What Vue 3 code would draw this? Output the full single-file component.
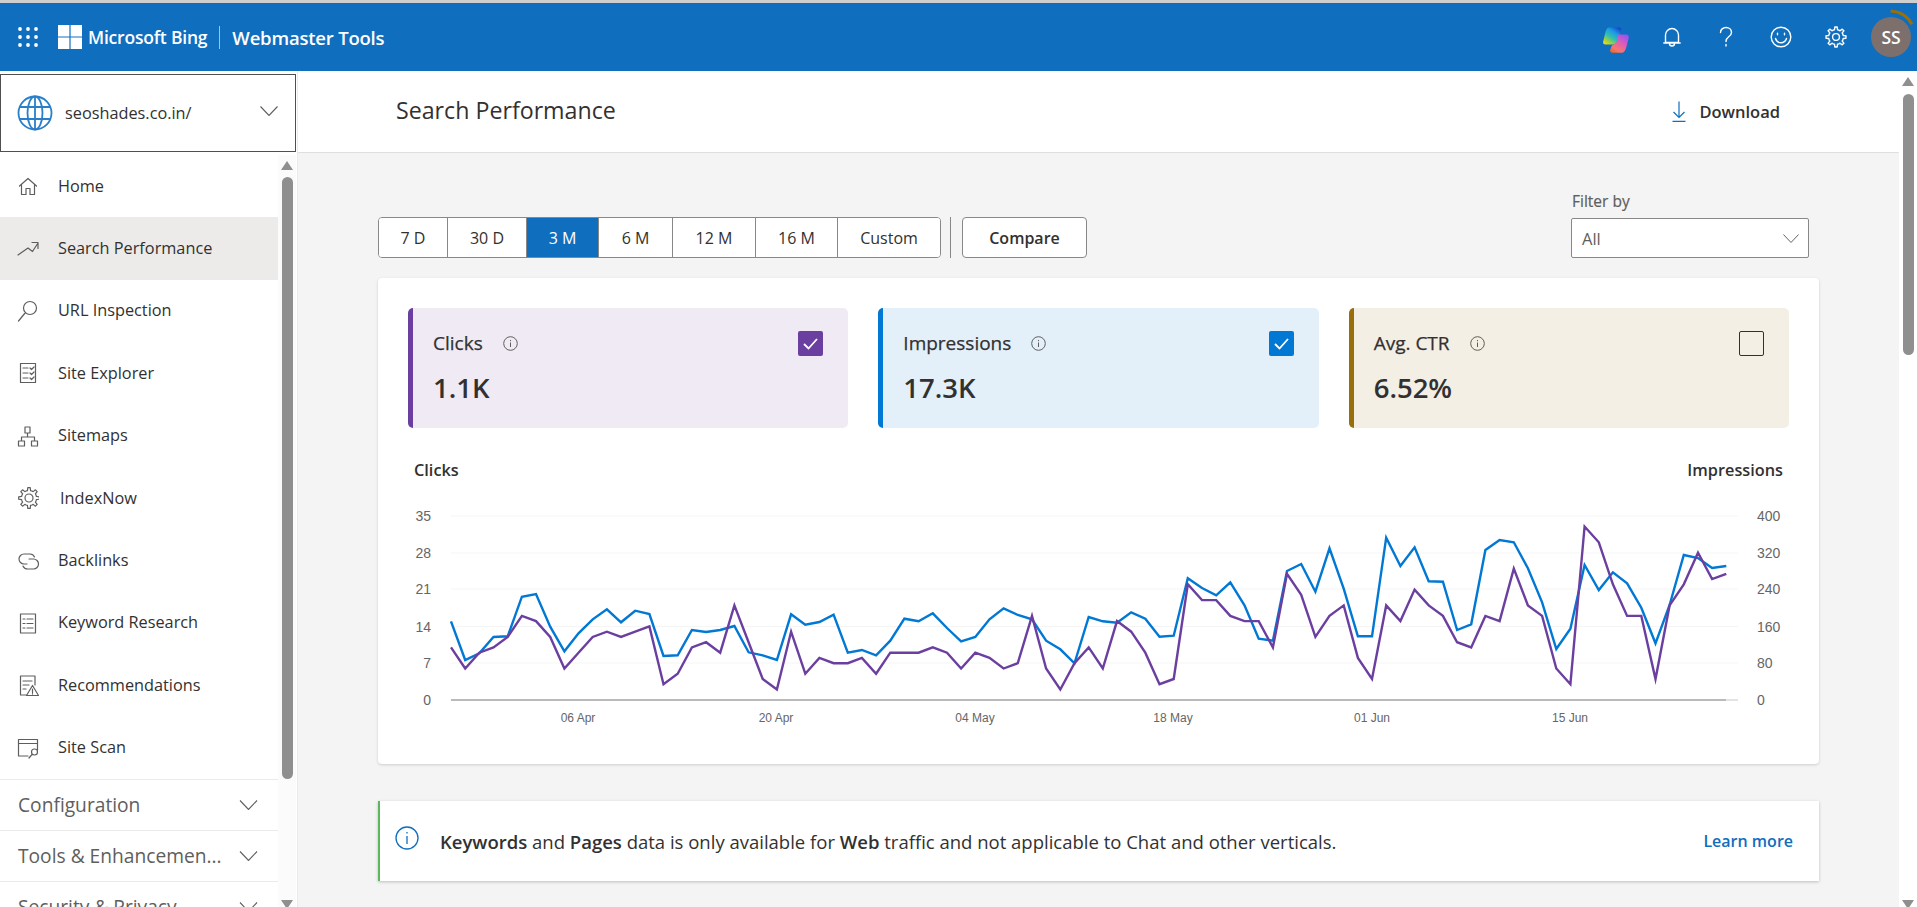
<script setup>
const gear = (cx, cy, r1, r2, n) => {
  let d = ''
  const step = (Math.PI * 2) / n
  for (let i = 0; i < n; i++) {
    const a = i * step
    const pts = [
      [a - step * 0.5, r1], [a - step * 0.26, r1], [a - step * 0.15, r2], [a + step * 0.15, r2], [a + step * 0.26, r1]
    ]
    pts.forEach(([t, r], j) => {
      const x = (cx + Math.cos(t) * r).toFixed(2)
      const y = (cy + Math.sin(t) * r).toFixed(2)
      d += (i === 0 && j === 0 ? 'M' : 'L') + x + ' ' + y
    })
  }
  return d + 'Z'
}
const circle = (cx, cy, r) => `M${cx - r} ${cy}a${r} ${r} 0 1 0 ${r * 2} 0a${r} ${r} 0 1 0 ${-r * 2} 0`

const navItems = [
  { label: 'Home', icon: 'M2.5 11 11 3.5l8.5 7.5M4.5 9.5V19.5H9V13.5h4V19.5h4.5V9.5' },
  { label: 'Search Performance', active: true, icon: 'M1 17 11 10l4.5 3.5 5.5-8.5M15 4.5h6v6' },
  { label: 'URL Inspection', icon: circle(13, 8, 6.5) + 'M1.5 21 8.5 12.5' },
  { label: 'Site Explorer', icon: 'M3.5 1.5h15v19h-15zM6 6h5M6 11h5M6 16h5M13 6l1.5 1.5L17 5M13 11l1.5 1.5L17 10M13 16l1.5 1.5L17 15' },
  { label: 'Sitemaps', icon: 'M8 2h5v6H8zM1.5 16h6v5h-6zM14.5 16h6v5h-6zM10.5 8v4M4.5 16v-4h13v4' },
  { label: 'IndexNow', shift: true, icon: gear(12, 11, 7.6, 10.4, 8) + circle(12, 11, 4) },
  { label: 'Backlinks', icon: 'M10 14H7a5 5 0 0 1 0-10h6a5 5 0 0 1 4.5 3M12 9h4.5a5 5 0 0 1 0 10h-6a5 5 0 0 1-4.5-3' },
  { label: 'Keyword Research', icon: 'M3.5 2h15v19h-15zM6 7h2M10 7h6M6 11.5h2M10 11.5h6M6 16h2M10 16h6' },
  { label: 'Recommendations', icon: 'M18 11V2H3.5v19h6M6 7h9M6 11h6M6 15h3M15.5 11.5 21.5 21.5H9.5zM15.5 15v3.5M15.5 19.5v.6' },
  { label: 'Site Scan', icon: 'M1.5 19V2.5h19V13M1.5 6.5h19M1.5 19H11' + circle(17.5, 15, 3) + 'M15 17.5l-3 3.5' }
]
const sections = ['Configuration', 'Tools & Enhancemen...', 'Security & Privacy']
const ranges = ['7 D', '30 D', '3 M', '6 M', '12 M', '16 M', 'Custom']
const rangeWidths = [69, 79, 72, 74, 83, 82, 102]
const metrics = [
  { label: 'Clicks', value: '1.1K', tone: 'purple', checked: true },
  { label: 'Impressions', value: '17.3K', tone: 'blue', checked: true },
  { label: 'Avg. CTR', value: '6.52%', tone: 'brown', checked: false }
]

const clicks = [10,6,9,10,12,16,15,12,6,9,12,13,12,13,14,3,5,10,11,9,18,11,4,2,13,5,8,7,7,8,5,9,9,9,10,9,6,9,8,6,7,16,6,2,7,10,6,15,13,9,3,4,22,19,19,16,15,15,10,24,20,12,16,18,8,4,18,15,21,18,16,11,10,16,15,25,18,16,6,3,33,30,22,16,16,4,18,22,28,23,24]
const blueZ = [394,510,490,441,439,320,312,410,484,430,388,358,397,362,372,498,496,420,426,420,408,487,496,510,373,404,396,374,488,480,496,452,386,394,370,414,454,441,388,355,375,388,452,478,520,381,394,398,367,386,440,437,265,294,316,277,346,446,452,243,222,305,175,296,439,439,143,228,172,274,275,420,403,180,150,157,235,337,477,416,225,300,247,280,353,460,345,195,204,234,228]
const X0 = 451
const PITCH = 14.17
const purplePts = clicks.map((c, i) => `${(X0 + PITCH * i).toFixed(1)},${(700 - c * 5.257).toFixed(1)}`).join(' ')
const bluePts = blueZ.map((z, i) => `${(X0 + PITCH * i).toFixed(1)},${(490 + z / 3).toFixed(1)}`).join(' ')
const gridYs = [516, 553, 589, 626.5, 663]
const leftAxis = [['35', 516], ['28', 553], ['21', 589], ['14', 627], ['7', 663], ['0', 700]]
const rightAxis = [['400', 516], ['320', 553], ['240', 589], ['160', 627], ['80', 663], ['0', 700]]
const dates = [['06 Apr', 578], ['20 Apr', 776], ['04 May', 975], ['18 May', 1173], ['01 Jun', 1372], ['15 Jun', 1570]]
const gridDots = [0, 1, 2]
</script>

<template>
  <div class="page">
    <div class="topline"></div>
    <header class="topbar">
      <svg class="apps" viewBox="0 0 20 20" width="20" height="20">
        <template v-for="r in gridDots" :key="r">
          <circle v-for="c in gridDots" :key="c" :cx="2 + c * 8" :cy="2 + r * 8" r="1.9" fill="#fff" />
        </template>
      </svg>
      <svg class="ms" viewBox="0 0 24 24" width="24" height="24">
        <path fill="#fff" d="M0 0h11.4v11.4H0zM12.6 0H24v11.4H12.6zM0 12.6h11.4V24H0zM12.6 12.6H24V24H12.6z" />
      </svg>
      <span class="brand">Microsoft Bing</span>
      <span class="brand-sep"></span>
      <span class="brand wm">Webmaster Tools</span>
      <div class="top-icons">
        <svg class="copilot" viewBox="0 0 26 26" width="26" height="26">
          <defs>
            <linearGradient id="cpA" x1="0.85" y1="0" x2="0.15" y2="1">
              <stop offset="0" stop-color="#1246c4" /><stop offset="0.3" stop-color="#1c9ae6" /><stop offset="0.6" stop-color="#35c2a8" /><stop offset="0.85" stop-color="#b6d22f" /><stop offset="1" stop-color="#f4d51f" />
            </linearGradient>
            <linearGradient id="cpB" x1="0.85" y1="0" x2="0.2" y2="1">
              <stop offset="0" stop-color="#8f55f2" /><stop offset="0.45" stop-color="#e25cb8" /><stop offset="0.8" stop-color="#f6776c" /><stop offset="1" stop-color="#f4662e" />
            </linearGradient>
          </defs>
          <path fill="url(#cpA)" d="M6 .5H16C18 .5 18.500 2 18 3.500L14.500 14C13.500 16.500 12 17.500 9.500 17.500H2.500C.8 17.500-.2 16.500.2 14.500L2 7C3 3 4 .5 6 .5Z" />
          <path fill="url(#cpB)" d="M15.500 7.500H23.500C25.300 7.500 26.200 9 25.700 11L23.500 19.500C22.500 23.500 21 25.800 18.500 25.800H9.500C7.500 25.800 6.500 24 7.500 22L8.500 19.500C9 18 10 17.500 11.500 17C13.500 16.300 14 14.500 14.500 12.500L15 9C15.100 8 15.200 7.500 15.500 7.500Z" />
        </svg>
        <svg class="t-ic bell" viewBox="0 0 20 22" width="20" height="22">
          <path d="M3.500 16.500V9a6.500 6.500 0 0 1 13 0v7.500zM1.800 17h16.400M7.500 17.500a2.500 2.500 0 0 0 5 0" />
        </svg>
        <svg class="t-ic help" viewBox="0 0 20 22" width="20" height="22">
          <path d="M4.500 6.500C4.500 3.500 7 1.500 10 1.500s5.500 2 5.500 5c0 2-1 3-2.800 4.300C11 12 10 13 10 15.500M10 18.500v1.500" />
        </svg>
        <svg class="t-ic smile" viewBox="0 0 22 22" width="22" height="22">
          <path :d="circle(11, 11, 9.8)" />
          <path d="M5.500 12.500c1 3 3 4.300 5.500 4.300s4.500-1.300 5.500-4.300M7.500 7.300v1.500M14.500 7.300v1.500" />
        </svg>
        <svg class="t-ic cog" viewBox="0 0 22 22" width="22" height="22">
          <path :d="gear(11, 11, 7.4, 10, 8)" />
          <path :d="circle(11, 11, 3.4)" />
        </svg>
        <div class="avatar">
          <span>SS</span>
          <svg class="ring" viewBox="0 0 56 56" width="56" height="56">
            <path d="M27.700 2A26 26 0 0 1 49 15.300" fill="none" stroke="#986f0b" stroke-width="3" />
          </svg>
        </div>
      </div>
    </header>

    <div class="body">
      <aside class="sidebar">
        <div class="site">
          <svg viewBox="0 0 36 36" width="36" height="36" class="globe">
            <circle cx="18" cy="18" r="16.500" />
            <ellipse cx="18" cy="18" rx="7.500" ry="16.500" />
            <path d="M3 12h30M3 24h30M18 1.500v33" />
          </svg>
          <span class="site-name">seoshades.co.in/</span>
          <svg class="chev site-chev" viewBox="0 0 18 10" width="18" height="10"><path d="M.5.5 9 9.500 17.500.5" /></svg>
        </div>
        <div class="side-scroll">
          <nav class="side-list">
            <a v-for="item in navItems" :key="item.label" class="nav-row" :class="{ active: item.active }">
              <svg class="nav-ic" viewBox="0 0 22 22" width="22" height="22"><path :d="item.icon" /></svg>
              <span :class="{ shifted: item.shift }">{{ item.label }}</span>
            </a>
            <div v-for="s in sections" :key="s" class="sec-row">
              <span class="sec-label">{{ s }}</span>
              <svg class="chev" viewBox="0 0 18 10" width="19" height="10"><path d="M.5.5 9 9.500 17.500.5" /></svg>
            </div>
          </nav>
          <div class="bar bar-side">
            <i class="arrow up"></i>
            <i class="thumb"></i>
            <i class="arrow down"></i>
          </div>
        </div>
      </aside>

      <main class="main">
        <div class="title-bar">
          <h1>Search Performance</h1>
          <button class="dl">
            <svg viewBox="0 0 14 21" width="14" height="21"><path d="M7 .5v16M1.500 11 7 16.500 12.500 11M.5 20.300h13" /></svg>
            <span>Download</span>
          </button>
        </div>
        <div class="content">
          <div class="toolbar">
            <div class="seg">
              <button
                v-for="(r, i) in ranges"
                :key="r"
                class="seg-btn"
                :class="{ on: r === '3 M' }"
                :style="{ width: rangeWidths[i] + 'px' }"
              >{{ r }}</button>
            </div>
            <span class="tool-sep"></span>
            <button class="compare">Compare</button>
            <div class="filter">
              <label>Filter by</label>
              <div class="select">
                <span>All</span>
                <svg class="chev" viewBox="0 0 18 10" width="16" height="9"><path d="M.5.5 9 9.500 17.500.5" /></svg>
              </div>
            </div>
          </div>

          <section class="card">
            <div class="metrics">
              <div v-for="m in metrics" :key="m.label" class="metric" :class="m.tone">
                <div class="m-top">
                  <span class="m-label">{{ m.label }}</span>
                  <svg class="info" viewBox="0 0 15 15" width="15" height="15">
                    <circle cx="7.500" cy="7.500" r="6.800" />
                    <path d="M7.500 6.500v4.500M7.500 4v1.200" />
                  </svg>
                  <span class="check">
                    <svg v-if="m.checked" viewBox="0 0 25 25" width="25" height="25"><path d="M6 13l4.500 4.500L19 8" /></svg>
                  </span>
                </div>
                <div class="m-value">{{ m.value }}</div>
              </div>
            </div>
            <div class="axis-titles"><span>Clicks</span><span>Impressions</span></div>
            <svg class="chart" viewBox="408 490 1381 250" width="1381" height="250">
              <line v-for="y in gridYs" :key="y" x1="451" x2="1738" :y1="y" :y2="y" class="grid" />
              <line x1="1726" x2="1738" y1="700" y2="700" class="base-end" />
              <line x1="451" x2="1726" y1="700" y2="700" class="base" />
              <polyline :points="bluePts" class="line l-blue" />
              <polyline :points="purplePts" class="line l-purple" />
              <text v-for="a in leftAxis" :key="'l' + a[0]" x="431" :y="a[1] + 5" text-anchor="end" class="ax">{{ a[0] }}</text>
              <text v-for="a in rightAxis" :key="'r' + a[0]" x="1757" :y="a[1] + 5" class="ax">{{ a[0] }}</text>
              <text v-for="d in dates" :key="d[0]" :x="d[1]" y="722" text-anchor="middle" class="dt">{{ d[0] }}</text>
            </svg>
          </section>

          <div class="notice">
            <svg viewBox="0 0 24 24" width="24" height="24" class="n-ic">
              <circle cx="12" cy="12" r="11" />
              <path d="M12 10v8M12 6v1.500" />
            </svg>
            <p><b>Keywords</b> and <b>Pages</b> data is only available for <b>Web</b> traffic and not applicable to Chat and other verticals.</p>
            <a class="learn">Learn more</a>
          </div>
        </div>
      </main>
      <div class="bar bar-main">
        <i class="arrow up"></i>
        <i class="thumb"></i>
        <i class="arrow down"></i>
      </div>
    </div>
  </div>
</template>

<style>
html, body { margin: 0; padding: 0; overflow: hidden; }
</style>

<style scoped>
.page {
  width: 1917px;
  height: 907px;
  overflow: hidden;
  display: flex;
  flex-direction: column;
  font-family: "Open Sans", "Noto Sans", sans-serif;
  color: #323130;
  background: #fff;
}
.topline { height: 3px; background: #cfcfcf; flex: none; }
.topbar {
  height: 68px;
  flex: none;
  background: #106ebe;
  display: flex;
  align-items: center;
  color: #fff;
  padding-left: 18px;
}
.apps { margin-right: 20px; }
.ms { margin-right: 6px; }
.brand { font-size: 17.5px; font-weight: 600; letter-spacing: -0.2px; white-space: nowrap; }
.wm { font-size: 18.5px; }
.brand-sep { width: 1px; height: 23px; background: rgba(255, 255, 255, 0.6); margin: 0 12px; }
.top-icons { margin-left: auto; position: relative; width: 330px; height: 68px; display: flex; align-items: center; }
.t-ic { fill: none; stroke: #fff; stroke-width: 1.4; stroke-linecap: round; stroke-linejoin: round; position: absolute; top: 23px; }
.copilot { position: absolute; left: 16px; top: 24px; }
.bell { left: 75px; top: 23px; }
.help { left: 129px; top: 23px; }
.smile { left: 183px; }
.cog { left: 238px; }
.avatar {
  position: absolute;
  left: 284px;
  top: 14px;
  width: 40px;
  height: 40px;
  border-radius: 50%;
  background: #7d706c;
  display: flex;
  align-items: center;
  justify-content: center;
  font-weight: 600;
  font-size: 17.5px;
}
.ring { position: absolute; left: -8px; top: -8px; }

.body { flex: 1; display: flex; min-height: 0; }
.sidebar { width: 297px; flex: none; border-right: 1px solid #edebe9; display: flex; flex-direction: column; }
.site {
  margin-top: 3px;
  height: 78px;
  width: 296px;
  box-sizing: border-box;
  border: 1px solid #4f4f4f;
  flex: none;
  display: flex;
  align-items: center;
  padding-left: 16px;
  padding-right: 17px;
}
.globe { fill: none; stroke: #2a7fc9; stroke-width: 1.8; }
.site-name { margin-left: 12px; font-size: 16.3px; color: #323130; }
.site-chev { margin-left: auto; margin-top: -4px; }
.chev { fill: none; stroke: #605e5c; stroke-width: 1.1; flex: none; }
.side-scroll { flex: 1; display: flex; padding-top: 3px; min-height: 0; overflow: hidden; }
.side-list { width: 278px; flex: none; }
.nav-row {
  height: 62.4px;
  display: flex;
  align-items: center;
  padding-left: 17px;
  font-size: 16.3px;
  color: #323130;
}
.nav-row span { margin-top: -1px; }
.nav-row.active { background: #edebe9; }
.nav-ic { fill: none; stroke: #605e5c; stroke-width: 1.2; stroke-linejoin: round; stroke-linecap: round; margin-right: 19px; flex: none; }
.shifted { margin-left: 2px; }
.sec-row {
  height: 51px;
  box-sizing: border-box;
  border-top: 1px solid #edebe9;
  display: flex;
  align-items: center;
  padding: 0 20px 0 18px;
  font-size: 19.2px;
  color: #605e5c;
  justify-content: space-between;
}
.sec-label { white-space: nowrap; }

.bar { width: 18px; flex: none; display: flex; flex-direction: column; align-items: center; background: #fbfbfb; }
.bar-side { height: 752px; }
.bar-main { background: #fff; }
.thumb { display: block; width: 11px; background: #8f8f8f; border-radius: 6px; flex: none; }
.arrow { display: block; width: 0; height: 0; border-left: 6.5px solid transparent; border-right: 6.5px solid transparent; flex: none; }
.arrow.up { border-bottom: 9px solid #8f8f8f; margin-top: 6px; margin-bottom: 7px; }
.arrow.down { border-top: 9px solid #8f8f8f; margin-top: auto; margin-bottom: -2px; }
.bar-side .thumb { height: 602px; }
.bar-main .thumb { height: 261px; }
.bar-main .arrow.up { margin-bottom: 8px; }

.main { flex: 1; min-width: 0; display: flex; flex-direction: column; }
.title-bar {
  height: 82px;
  flex: none;
  box-sizing: border-box;
  border-bottom: 1px solid #e1dfdd;
  display: flex;
  align-items: center;
  justify-content: space-between;
  padding: 0 119px 0 98px;
}
h1 { margin: -4px 0 0; font-size: 23.2px; font-weight: 400; color: #323130; }
.dl { border: 0; background: none; padding: 0; display: flex; align-items: center; gap: 13px; font: 600 16.5px "Open Sans", sans-serif; color: #323130; }
.dl svg { fill: none; stroke: #106ebe; stroke-width: 1.2; }
.content { flex: 1; background: #f4f4f4; padding: 0 80px; min-height: 0; }
.toolbar { display: flex; align-items: flex-end; height: 105px; }
.seg { display: flex; height: 41px; box-sizing: border-box; border: 1px solid #8a8886; border-radius: 4px; overflow: hidden; background: #fff; flex: none; }
.seg-btn { border: 0; border-right: 1px solid #8a8886; background: #fff; font: 400 16px "Open Sans", sans-serif; color: #323130; padding: 0; box-sizing: border-box; flex: none; }
.seg-btn:last-child { border-right: 0; }
.seg-btn.on { background: #106ebe; color: #fff; }
.tool-sep { width: 1px; height: 41px; background: #8a8886; margin: 0 11px 0 9px; flex: none; }
.compare { width: 125px; height: 41px; box-sizing: border-box; border: 1px solid #8a8886; border-radius: 4px; background: #fff; font: 600 16px "Open Sans", sans-serif; color: #323130; }
.filter { margin-left: auto; margin-right: 10px; width: 238px; display: flex; flex-direction: column; }
.filter label { font-size: 15.5px; font-weight: 500; color: #605e5c; line-height: 22px; margin-bottom: 6px; padding-left: 1px; -webkit-text-stroke: 0.2px #605e5c; }
.select { height: 40px; box-sizing: border-box; border: 1px solid #8a8886; border-radius: 2px; background: #fff; display: flex; align-items: center; justify-content: space-between; padding: 0 9px 0 10px; font-size: 16.5px; color: #605e5c; }

.card { margin-top: 20px; height: 486px; box-sizing: border-box; background: #fff; border-radius: 4px; box-shadow: 0 1px 3px rgba(0, 0, 0, 0.16); padding: 30px; }
.metrics { display: grid; grid-template-columns: repeat(3, 1fr); gap: 30px; }
.metric { height: 120px; box-sizing: border-box; border-radius: 5px; border-left: 5px solid; padding: 20px 25px 0 20px; }
.purple { background: #f0eaf5; border-color: #6b3fa0; }
.blue { background: #e3f0fa; border-color: #0078d4; }
.brown { background: #f3efe5; border-color: #986f0b; }
.m-top { display: flex; align-items: center; height: 28px; margin-top: 1px; }
.m-label { font-size: 19px; font-weight: 500; color: #323130; margin-right: 20px; -webkit-text-stroke: 0.25px #323130; }
.info { fill: none; stroke: #605e5c; stroke-width: 1; }
.check { margin-left: auto; width: 25px; height: 25px; box-sizing: border-box; border-radius: 2px; display: block; }
.check svg { display: block; fill: none; stroke: #fff; stroke-width: 1.8; }
.purple .check { background: #6b3fa0; }
.blue .check { background: #0078d4; }
.brown .check { border: 1px solid #323130; }
.m-value { font-size: 27.5px; font-weight: 600; line-height: 40px; margin-top: 11px; color: #323130; }
.axis-titles { display: flex; justify-content: space-between; margin-top: 31px; padding: 0 6px; font-size: 16.3px; font-weight: 600; line-height: 22px; }
.chart { display: block; margin-top: 9px; }
.grid { stroke: #f5f5f5; stroke-width: 1; }
.base { stroke: #767676; stroke-width: 1.2; }
.base-end { stroke: #c8c8c8; stroke-width: 1; }
.line { fill: none; stroke-width: 2.4; stroke-linejoin: miter; stroke-miterlimit: 6; }
.l-blue { stroke: #0078d4; }
.l-purple { stroke: #6b3fa0; }
.ax { font: 14px "Liberation Sans", Arial, sans-serif; fill: #666; }
.dt { font: 12px "Liberation Sans", Arial, sans-serif; fill: #666; }

.notice {
  margin-top: 37px;
  height: 80px;
  box-sizing: border-box;
  background: #fff;
  border-left: 2px solid #5cb85c;
  box-shadow: 0 1px 3px rgba(0, 0, 0, 0.22);
  display: flex;
  align-items: center;
  padding: 0 26px 0 15px;
  font-size: 18.5px;
  color: #323130;
}
.n-ic { fill: none; stroke: #106ebe; stroke-width: 1.3; margin-top: -6px; flex: none; }
.notice p { margin: 0 0 0 21px; }
.notice b { font-weight: 600; }
.learn { margin-left: auto; color: #106ebe; font-weight: 600; font-size: 16px; }
</style>
